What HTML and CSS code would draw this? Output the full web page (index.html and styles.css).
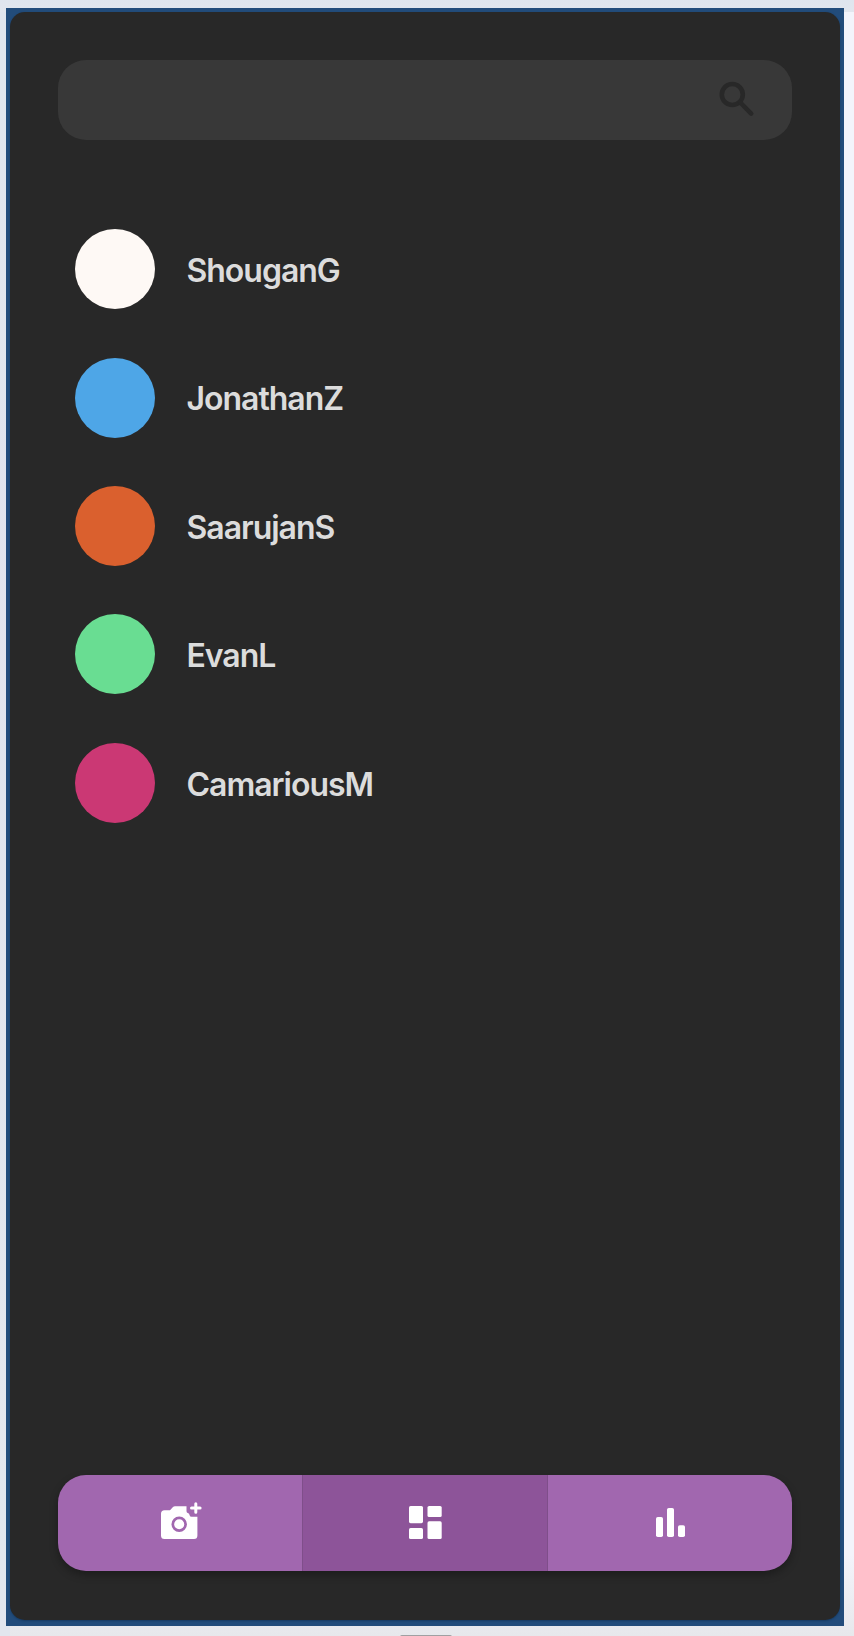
FILE: index.html
```html
<!DOCTYPE html>
<html lang="en">
<head>
<meta charset="utf-8">
<title>Friends</title>
<link rel="stylesheet" href="styles.css">
</head>
<body>
<div class="backdrop">
<div class="frame">
<main class="screen">
  <div class="search">
    <svg class="search-icon" viewBox="0 0 36 36"><circle cx="13.3" cy="13.5" r="10.5"/><path d="M21.3 21.5 32.2 32.6"/></svg>
  </div>
  <ul class="people">
    <li class="person"><span class="avatar white"></span><span class="name">ShouganG</span></li>
    <li class="person"><span class="avatar blue"></span><span class="name">JonathanZ</span></li>
    <li class="person"><span class="avatar orange"></span><span class="name">SaarujanS</span></li>
    <li class="person"><span class="avatar green"></span><span class="name">EvanL</span></li>
    <li class="person"><span class="avatar pink"></span><span class="name">CamariousM</span></li>
  </ul>
  <nav class="tabs">
    <a class="tab tab-camera">
      <svg class="camera" viewBox="0 0 42 38"><path d="M5 8.3H10L13 5Q13.8 4.200 15 4.200H26.500V9.300Q26.500 11 28.200 11.300Q29.300 11.500 29.600 13.200Q30 14.800 31.600 14.800H37.400V33.500Q37.400 37 34 37H4.500Q1 37 1 33.500V11.800Q1 8.300 4.500 8.300Z"/><circle class="lens" cx="19.200" cy="22.200" r="6.400"/><path class="plus" d="M35.800 1.700V10.300M31.500 6H40.100"/></svg>
    </a>
    <a class="tab active">
      <svg class="grid" viewBox="0 0 33 33"><rect width="14" height="17.200" rx="1.600"/><rect y="22" width="14" height="11" rx="1.600"/><rect x="18.500" width="14.200" height="11" rx="1.600"/><rect x="18.500" y="15.300" width="14.200" height="17.700" rx="1.600"/></svg>
    </a>
    <a class="tab">
      <svg class="bars" viewBox="0 0 29 29"><rect y="9" width="7" height="20" rx="1.800"/><rect x="11" width="7" height="29" rx="1.800"/><rect x="22" y="17.200" width="7" height="11.800" rx="1.800"/></svg>
    </a>
  </nav>
</main>
</div>
<div class="handle"></div>
</div>
</body>
</html>
```
FILE: styles.css
```css
* { box-sizing: border-box; }
body { margin: 0; font-family: Inter, "Liberation Sans", sans-serif; }
.backdrop {
  width: 854px;
  height: 1636px;
  padding: 8px 10px 0 6px;
  background:
    linear-gradient(#dfe5ee, #e2e6ee) 0 0 / 854px 12px no-repeat,
    linear-gradient(#e0e5ee, #e2e6ee) 0 0 / 10px 1636px no-repeat,
    linear-gradient(#f3f4fb 0, #f3f4fb 95%, #e7e8ec 100%);
}
.frame {
  height: 1618px;
  padding: 4px 4px 6px;
  background: #224c7b;
}
.screen {
  display: flex;
  flex-direction: column;
  height: 1608px;
  padding: 48px 48px 49px;
  border-radius: 15px;
  background: #282828;
  box-shadow: 0 1px 2px #163a62;
}
.search {
  display: flex;
  align-items: center;
  justify-content: flex-end;
  height: 80px;
  padding: 0 37px 2px 0;
  border-radius: 28px;
  background: #383838;
}
.search-icon {
  width: 36px;
  height: 36px;
  fill: none;
  stroke: #282828;
  stroke-width: 4.600;
  stroke-linecap: round;
}
.people {
  display: flex;
  flex-direction: column;
  gap: 48.400px;
  margin: 89.200px 0 0;
  padding: 0 0 0 16.500px;
  list-style: none;
}
.person { display: flex; align-items: center; height: 80px; }
.avatar { width: 80px; height: 80px; border-radius: 50%; }
.white { background: #fef9f5; }
.blue { background: #4ea6e7; }
.orange { background: #da602e; }
.green { background: #69dd92; }
.pink { background: #cb3874; }
.name {
  padding: 3.500px 0 0 32px;
  color: #dcdcdc;
  font-size: 32px;
  font-weight: 600;
  line-height: 40px;
  letter-spacing: -1.020px;
}
.tabs {
  display: grid;
  grid-template-columns: 244px 246px 1fr;
  height: 96px;
  margin-top: auto;
  border-radius: 28px;
  overflow: hidden;
  background: #a167af;
  box-shadow: 0 4px 8px rgba(0, 0, 0, .3);
}
.tab {
  display: flex;
  align-items: center;
  justify-content: center;
  padding-bottom: 1px;
}
.tab-camera { padding: 0 0 4px 1px; }
.active {
  background: #8d5499;
  border: solid #7f4e8a;
  border-width: 0 1px;
}
.camera { width: 42px; height: 38px; fill: #fff; }
.lens { stroke: #a167af; stroke-width: 2.700; }
.plus { stroke: #fff; stroke-width: 3; stroke-linecap: round; }
.grid { width: 33px; height: 33px; fill: #fff; }
.bars { width: 29px; height: 29px; fill: #fff; }
.handle {
  width: 52px;
  height: 2px;
  margin: 8.500px 0 0 394px;
  border-radius: 2px 2px 0 0;
  background: #a0a0a2;
}
```
